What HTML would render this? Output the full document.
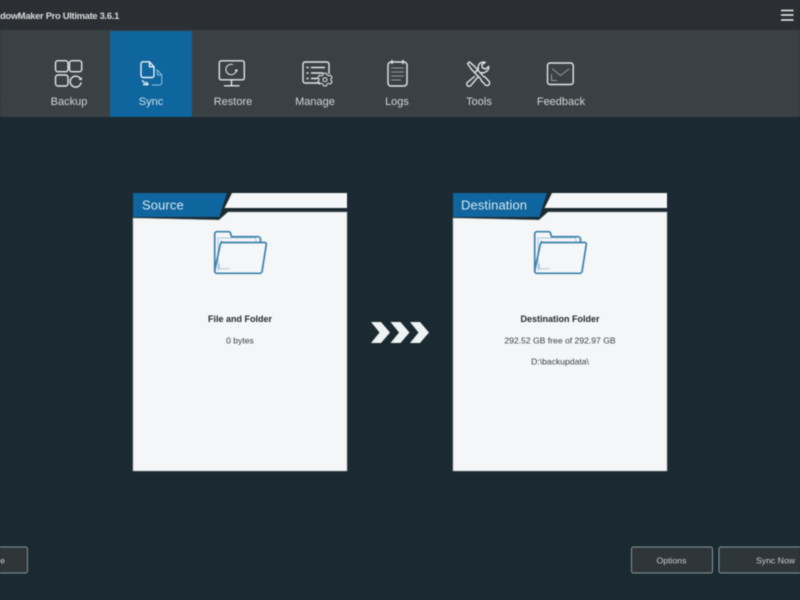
<!DOCTYPE html>
<html>
<head>
<meta charset="utf-8">
<style>
html,body{margin:0;padding:0;width:800px;height:600px;overflow:hidden;background:#1b2a30}
svg{display:block;filter:blur(.45px)}
text{font-family:"Liberation Sans",sans-serif}
.nav{font-size:11px;fill:#d2d6d7;text-anchor:middle}
.i{fill:none;stroke:#e3e6e7;stroke-width:1.4;stroke-linecap:round;stroke-linejoin:round}
.t{fill:none;stroke:#e3e6e7;stroke-width:.9;opacity:.55;stroke-linecap:round;stroke-linejoin:round}
.h{font-size:13px;fill:#d9e8f1;letter-spacing:.1px}
.b{font-size:9px;font-weight:bold;fill:#26282a;text-anchor:middle}
.s{font-size:8.6px;fill:#3a3c3e;text-anchor:middle}
.btn{fill:#2e3639;stroke:#81989a;stroke-width:1}
.bt{font-size:8.7px;fill:#c9cfd0;text-anchor:middle}
.f{fill:none;stroke:#3a82ab;stroke-width:1.7;stroke-linejoin:round}
.fl{fill:none;stroke:#a9c8da;stroke-width:1;stroke-linejoin:round}
</style>
</head>
<body>
<svg width="800" height="600" viewBox="0 0 800 600" xmlns="http://www.w3.org/2000/svg">
<rect width="800" height="600" fill="#1b2a30"/>
<rect width="800" height="30" fill="#2b2e32"/>
<rect y="30" width="800" height="87" fill="#3a4144"/>
<rect x="110" y="31" width="82" height="86" fill="#0f659d"/>

<text x="119" y="19" text-anchor="end" font-size="9.4" font-weight="bold" letter-spacing="-.3" fill="#d8dadb">ShadowMaker Pro Ultimate 3.6.1</text>
<path d="M781 10.500h12.500M781 15h12.500M781 20h12.500" stroke="#f0f2f2" stroke-width="1.500" fill="none"/>

<text class="nav" x="-14" y="105">Home</text>
<text class="nav" x="69" y="105">Backup</text>
<text class="nav" x="151" y="105" style="fill:#cfe3ef">Sync</text>
<text class="nav" x="233" y="105">Restore</text>
<text class="nav" x="315" y="105">Manage</text>
<text class="nav" x="397" y="105">Logs</text>
<text class="nav" x="479" y="105">Tools</text>
<text class="nav" x="561" y="105">Feedback</text>

<!-- Backup -->
<rect class="i" x="55.500" y="60.700" width="12.500" height="11" rx="2.500"/>
<rect class="i" x="69.500" y="60.700" width="12.200" height="11" rx="2.500"/>
<rect class="i" x="55.500" y="75" width="12.500" height="11" rx="2.500"/>
<path class="i" d="M80.500 79A5.500 5.500 0 1 0 81 83"/>
<path d="M78.500 79.500l3.300.8.200-3.200z" fill="#e3e6e7"/>

<!-- Sync -->
<path class="i" style="stroke:#eaf2f7" d="M143 61.800h6.500l4.500 5V75.500a2 2 0 0 1-2 2H143a2 2 0 0 1-2-2V63.800a2 2 0 0 1 2-2zM149.500 62v4.800h4.400"/>
<path d="M156 70.300h1.500l4.300 4.600V83a2 2 0 0 1-2 2H152" fill="none" stroke="#8fc1e0" stroke-width="1"/>
<path d="M157.500 70.500v4.500h4.200" fill="none" stroke="#8fc1e0" stroke-width="1"/>
<path d="M142 80.500l3 2.500M143 84.500h5" fill="none" stroke="#eaf2f7" stroke-width="1.400"/>
<path d="M146 81l3.200 3.400-3.600 1.200z" fill="#eaf2f7"/>

<!-- Restore -->
<rect class="i" x="219.300" y="60.800" width="25" height="19" rx="2"/>
<path class="i" style="stroke-width:1" d="M236.300 70A5.200 5.200 0 1 1 232.500 64.500"/>
<path d="M234.500 69.500l3.500.3-1.500 2.800z" fill="#e3e6e7"/>
<path class="i" d="M231.500 80v5M224.500 85.800h14.500"/>

<!-- Manage -->
<path class="i" d="M319.500 83H305a2 2 0 0 1-2-2V64a2 2 0 0 1 2-2h22a2 2 0 0 1 2 2v9.500"/>
<path class="i" d="M307 67.500h1M311.500 67.500h13M307 73h1M311.500 73h11M307 78.500h1M311.500 78.500h6"/>
<path class="i" style="stroke-width:1" d="M323.500 73.300h3l.6 1.800 1.800.8 1.700-.8 1.600 2.400-1.300 1.300v1.600l1.300 1.300-1.600 2.400-1.700-.8-1.800.8-.6 1.800h-3l-.6-1.800-1.800-.8-1.700.8-1.600-2.400 1.300-1.300v-1.600l-1.300-1.300 1.600-2.400 1.700.8 1.800-.8z"/>
<circle class="i" style="stroke-width:1" cx="325" cy="79.700" r="2"/>

<!-- Logs -->
<rect class="i" x="388" y="62" width="19" height="24" rx="3"/>
<path class="i" d="M392 60.500v3M403 60.500v3"/>
<path class="t" d="M391.500 68h12M391.500 72h12M391.500 76h12M391.500 80h9"/>

<!-- Tools -->
<path class="i" d="M467.500 63.500l2-1.600 5 4.400 9.200 10.400 1.200.2 4 4.200a2.500 2.500 0 0 1-3.700 3.700l-4-4.300-.3-1.300-9.600-10.100z"/>
<path class="i" d="M474.500 76.500l-7.200 6a2.300 2.300 0 0 0 3.300 3.200l8-9.400M481.500 72.500c.9.3 2 .3 3 0 2.800-.9 4.300-3.200 4.200-6l-3.400 2.600-3-1.400-.3-3.300 3.300-2c-2.700-.9-5.600.2-6.700 2.700-.6 1.300-.6 2.600-.2 3.800l-3.500 3.700"/>

<!-- Feedback -->
<rect class="i" x="547.500" y="63" width="25.700" height="21.500" rx="2.500"/>
<path class="t" style="stroke-width:1" d="M552.500 69l8 6.500 8.500-6.500M551.500 74.500v6h5"/>

<!-- Source card -->
<path d="M232 193H347V208H224.500z" fill="#f5f6f7"/>
<path d="M133 218L219 220 228 212H347V471H133z" fill="#f5f6f7" stroke="#9fb0b3" stroke-width=".6"/>
<path d="M133 193h94l-7.700 24H133z" fill="#0f659d"/>
<text class="h" x="142" y="209.500">Source</text>
<path class="fl" d="M218 270V238h38v4"/>
<path class="fl" d="M218.500 270.500l.3-7 1.100 5.300h9.600"/>
<path class="f" d="M221.500 242.300V241M214.700 270.500V234a2.300 2.300 0 0 1 2.300-2.300h11.500a2 2 0 0 1 2 1.500l1 3.500h26.500a2.500 2.500 0 0 1 2.500 2.500v3"/>
<path class="f" d="M222.300 242.500h42.500a1.600 1.600 0 0 1 1.500 2l-4.200 26.600a2.600 2.600 0 0 1-2.600 2.200H217a2.400 2.400 0 0 1-2.300-2.800l5.700-26.600a2 2 0 0 1 1.900-1.400z"/>
<text class="b" x="240" y="322">File and Folder</text>
<text class="s" x="240" y="343.500">0 bytes</text>

<!-- Destination card -->
<path d="M552 193H667V208H544.500z" fill="#f5f6f7"/>
<path d="M453 218L539 220 548 212H667V471H453z" fill="#f5f6f7" stroke="#9fb0b3" stroke-width=".6"/>
<path d="M453 193h94l-7.700 24H453z" fill="#0f659d"/>
<text class="h" x="461" y="209.500">Destination</text>
<g transform="translate(320,0)">
<path class="fl" d="M218 270V238h38v4"/>
<path class="fl" d="M218.500 270.500l.3-7 1.100 5.300h9.600"/>
<path class="f" d="M221.500 242.300V241M214.700 270.500V234a2.300 2.300 0 0 1 2.300-2.300h11.500a2 2 0 0 1 2 1.500l1 3.500h26.500a2.500 2.500 0 0 1 2.500 2.500v3"/>
<path class="f" d="M222.300 242.500h42.500a1.600 1.600 0 0 1 1.500 2l-4.200 26.600a2.600 2.600 0 0 1-2.600 2.200H217a2.400 2.400 0 0 1-2.300-2.800l5.700-26.600a2 2 0 0 1 1.900-1.400z"/>
</g>
<text class="b" x="560" y="322">Destination Folder</text>
<text class="s" x="560" y="343.500">292.52 GB free of 292.97 GB</text>
<text class="s" x="560" y="364.500">D:\backupdata\</text>

<!-- Arrows -->
<path d="M371 322h10l9 10.500-9 10.500h-10l8.500-10.500z" fill="#eef3f3"/>
<path d="M390.500 322h10l9 10.500-9 10.500h-10l8.500-10.500z" fill="#eef3f3"/>
<path d="M410 322h10l9 10.500-9 10.500h-10l8.500-10.500z" fill="#eef3f3"/>

<!-- Buttons -->
<rect class="btn" x="-20" y="547" width="47.500" height="26" rx="2"/>
<text class="bt" x="5" y="563.500" style="text-anchor:end">Schedule</text>
<rect class="btn" x="631.500" y="547" width="81" height="26" rx="2"/>
<text class="bt" x="671.500" y="563.500">Options</text>
<rect class="btn" x="719" y="547" width="100" height="26" rx="2"/>
<text class="bt" x="775.500" y="563.500">Sync Now</text>
</svg>
</body>
</html>
